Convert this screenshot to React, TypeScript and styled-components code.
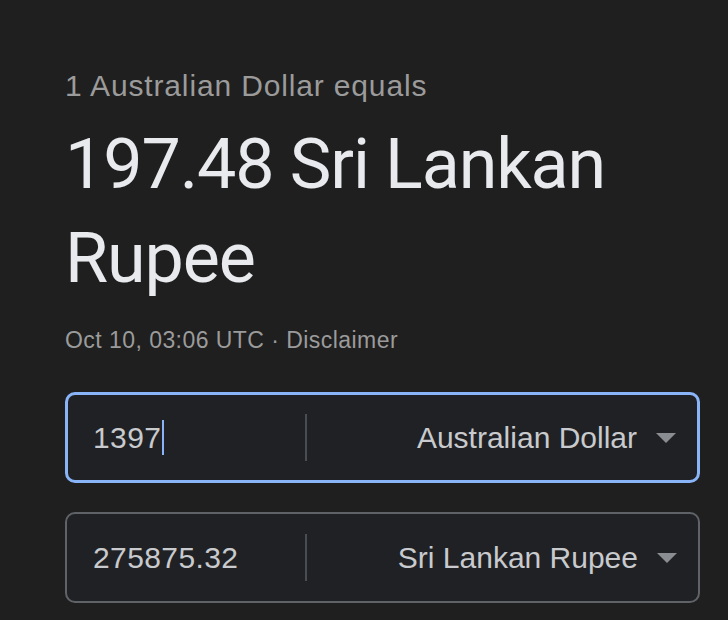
import React from 'react'
import styled, { createGlobalStyle } from 'styled-components'

const GlobalStyle = createGlobalStyle`
  html, body {
    margin: 0;
    padding: 0;
    background: #1f1f1f;
  }
`

const Page = styled.main`
  min-height: 620px;
  padding: 68px 0 0 65px;
  box-sizing: border-box;
  background: #1f1f1f;
  font-family: 'Liberation Sans', Arial, sans-serif;
`

const Subtitle = styled.div`
  font-size: 30px;
  line-height: 36px;
  letter-spacing: 0.85px;
  color: #9b9b9b;
`

const Title = styled.h1`
  margin: 13px 0 0 0;
  width: 634px;
  font-family: Roboto, 'Noto Sans', sans-serif;
  font-weight: 400;
  font-size: 70px;
  line-height: 94px;
  letter-spacing: -1.1px;
  color: #e8eaed;
`

const Meta = styled.div`
  margin-top: 21px;
  font-size: 23px;
  line-height: 28px;
  letter-spacing: 0.45px;
  color: #9b9b9b;
`

const Converter = styled.div`
  margin-top: 38px;
  width: 635px;
  display: flex;
  flex-direction: column;
  gap: 29px;
`

const Row = styled.div<{ $focused?: boolean }>`
  height: 91px;
  box-sizing: border-box;
  display: flex;
  align-items: center;
  background: #202124;
  border-radius: 10px;
  border: ${(p) => (p.$focused ? '3px solid #8ab4f8' : '2px solid #5f6368')};
`

const Amount = styled.div<{ $focused?: boolean }>`
  width: ${(p) => (p.$focused ? '237px' : '238px')};
  box-sizing: border-box;
  padding-left: ${(p) => (p.$focused ? '25px' : '26px')};
  display: flex;
  align-items: center;
  font-size: 30px;
  letter-spacing: 0.4px;
  color: #c8cacd;
`

const Caret = styled.span`
  display: inline-block;
  width: 2px;
  height: 35px;
  margin-left: 1px;
  background: #8ab4f8;
`

const Divider = styled.div`
  width: 2px;
  height: 47px;
  background: #4a4d51;
`

const Select = styled.div`
  flex: 1;
  display: flex;
  align-items: center;
  justify-content: flex-end;
  gap: 19px;
  padding-right: 21px;
  font-size: 30px;
  color: #c8cacd;
`

const Arrow = styled.svg`
  width: 20px;
  height: 10px;
  flex-shrink: 0;
`

function DropArrow() {
  return (
    <Arrow viewBox="0 0 20 10">
      <path d="M0 0 L20 0 L10 10 Z" fill="#8a8d91" />
    </Arrow>
  )
}

type FieldProps = {
  amount: string
  currency: string
  focused?: boolean
}

function Field({ amount, currency, focused }: FieldProps) {
  return (
    <Row $focused={focused}>
      <Amount $focused={focused}>
        {amount}
        {focused && <Caret />}
      </Amount>
      <Divider />
      <Select>
        {currency}
        <DropArrow />
      </Select>
    </Row>
  )
}

export default function App() {
  return (
    <>
      <GlobalStyle />
      <Page>
        <Subtitle>1 Australian Dollar equals</Subtitle>
        <Title>197.48 Sri Lankan Rupee</Title>
        <Meta>Oct 10, 03:06 UTC · Disclaimer</Meta>
        <Converter>
          <Field amount="1397" currency="Australian Dollar" focused />
          <Field amount="275875.32" currency="Sri Lankan Rupee" />
        </Converter>
      </Page>
    </>
  )
}
